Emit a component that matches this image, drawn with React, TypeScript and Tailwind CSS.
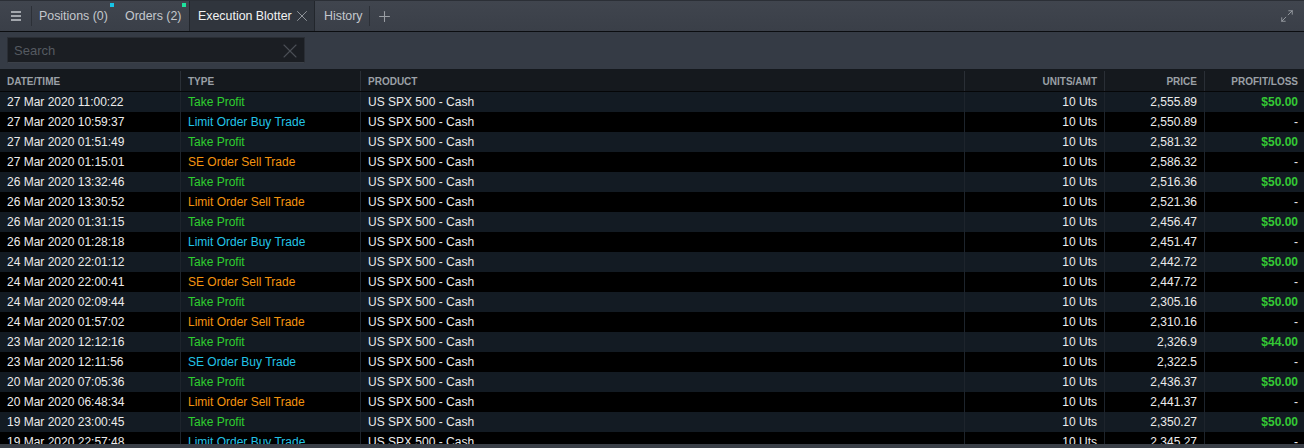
import React from "react";
import { Maximize2, X, Plus } from "lucide-react";

type Row = { dt: string; type: string; price: string; pl: string };

const rows: Row[] = [
  { dt: "27 Mar 2020 11:00:22", type: "Take Profit", price: "2,555.89", pl: "$50.00" },
  { dt: "27 Mar 2020 10:59:37", type: "Limit Order Buy Trade", price: "2,550.89", pl: "-" },
  { dt: "27 Mar 2020 01:51:49", type: "Take Profit", price: "2,581.32", pl: "$50.00" },
  { dt: "27 Mar 2020 01:15:01", type: "SE Order Sell Trade", price: "2,586.32", pl: "-" },
  { dt: "26 Mar 2020 13:32:46", type: "Take Profit", price: "2,516.36", pl: "$50.00" },
  { dt: "26 Mar 2020 13:30:52", type: "Limit Order Sell Trade", price: "2,521.36", pl: "-" },
  { dt: "26 Mar 2020 01:31:15", type: "Take Profit", price: "2,456.47", pl: "$50.00" },
  { dt: "26 Mar 2020 01:28:18", type: "Limit Order Buy Trade", price: "2,451.47", pl: "-" },
  { dt: "24 Mar 2020 22:01:12", type: "Take Profit", price: "2,442.72", pl: "$50.00" },
  { dt: "24 Mar 2020 22:00:41", type: "SE Order Sell Trade", price: "2,447.72", pl: "-" },
  { dt: "24 Mar 2020 02:09:44", type: "Take Profit", price: "2,305.16", pl: "$50.00" },
  { dt: "24 Mar 2020 01:57:02", type: "Limit Order Sell Trade", price: "2,310.16", pl: "-" },
  { dt: "23 Mar 2020 12:12:16", type: "Take Profit", price: "2,326.9", pl: "$44.00" },
  { dt: "23 Mar 2020 12:11:56", type: "SE Order Buy Trade", price: "2,322.5", pl: "-" },
  { dt: "20 Mar 2020 07:05:36", type: "Take Profit", price: "2,436.37", pl: "$50.00" },
  { dt: "20 Mar 2020 06:48:34", type: "Limit Order Sell Trade", price: "2,441.37", pl: "-" },
  { dt: "19 Mar 2020 23:00:45", type: "Take Profit", price: "2,350.27", pl: "$50.00" },
  { dt: "19 Mar 2020 22:57:48", type: "Limit Order Buy Trade", price: "2,345.27", pl: "-" },
];

function typeColor(t: string) {
  if (t === "Take Profit") return "text-[#2ed12e]";
  if (t.includes("Buy")) return "text-[#22c3e6]";
  return "text-[#f3930f]";
}

const grid = "grid grid-cols-[180px_180px_604px_140px_100px_100px]";

export default function App() {
  return (
    <div
      className="w-[1304px] h-[448px] overflow-hidden flex flex-col bg-[#343a43] text-[12px]"
      style={{ fontFamily: '"Liberation Sans", Arial, sans-serif' }}
    >
      {/* Tab bar */}
      <div className="h-[32px] shrink-0 flex items-stretch bg-gradient-to-b from-[#40454e] to-[#3a3f48] border-t border-[#2b2f36] border-b border-b-[#0b0d10] text-[12.4px]">
        <div className="w-[31px] flex items-center justify-center">
          <div className="flex flex-col gap-[2px] w-[10px]">
            <div className="h-[2px] bg-[#a3a7ad]" />
            <div className="h-[2px] bg-[#a3a7ad]" />
            <div className="h-[2px] bg-[#a3a7ad]" />
          </div>
        </div>
        <div className="w-px my-[5px] bg-[#2c3037]" />
        <div className="relative w-[85px] flex items-center pl-[7px] text-[#c4c8cd]">
          Positions (0)
          <div className="absolute left-[78px] top-[2px] w-[4px] h-[4px] bg-[#17c4e6]" />
        </div>
        <div className="relative w-[72px] flex items-center pl-[8px] text-[#c4c8cd]">
          Orders (2)
          <div className="absolute left-[65px] top-[2px] w-[4px] h-[4px] bg-[#1ee39d]" />
        </div>
        <div className="w-[126px] flex items-center pl-[8px] bg-[#30353d] border-l border-r border-[#22262c] text-[#f2f2f2]">
          <span className="w-[95px]">Execution Blotter</span>
          <X size={18} strokeWidth={1.2} className="text-[#9a9ea4]" />
        </div>
        <div className="w-[54px] flex items-center pl-[9px] text-[#c4c8cd]">History</div>
        <div className="w-px my-[5px] bg-[#2c3037]" />
        <div className="w-[29px] flex items-center justify-center text-[#9a9ea4]">
          <Plus size={17} strokeWidth={1.5} />
        </div>
        <div className="flex-1" />
        <div className="flex items-center pr-[10px] text-[#9da1a7]">
          <Maximize2 size={14} strokeWidth={1.5} />
        </div>
      </div>

      {/* Search */}
      <div className="h-[37px] shrink-0 bg-[#353b45] pt-[5px] pl-[7px]">
        <div className="w-[298px] h-[26px] bg-[#1b1e23] border border-[#2a2e35] border-b-[#3b4048] flex items-center pl-[6px] pr-[2px] pt-[1px]">
          <span className="flex-1 text-[13px] text-[#555a61]">Search</span>
          <X size={24} strokeWidth={1.1} className="text-[#4b4f56]" />
        </div>
      </div>

      {/* Header */}
      <div className={`${grid} h-[23px] shrink-0 bg-[#15191e] border-b border-[#050607] text-[10px] font-bold text-[#9ba0a6] pt-[2px]`}>
        <div className="flex items-center pl-[7px]">DATE/TIME</div>
        <div className="flex items-center pl-[7px] border-l border-[#2a2f36]">TYPE</div>
        <div className="flex items-center pl-[7px] border-l border-[#2a2f36]">PRODUCT</div>
        <div className="flex items-center justify-end pr-[7px] border-l border-[#2a2f36]">UNITS/AMT</div>
        <div className="flex items-center justify-end pr-[7px] border-l border-[#2a2f36]">PRICE</div>
        <div className="flex items-center justify-end pr-[6px] border-l border-[#2a2f36]">PROFIT/LOSS</div>
      </div>

      {/* Body */}
      <div className="h-[352px] overflow-hidden bg-black">
        {rows.map((r, i) => (
          <div
            key={i}
            className={`${grid} h-[20px] ${i % 2 === 0 ? "bg-[#131b23]" : "bg-black"} text-[#ececec]`}
          >
            <div className="flex items-center pl-[7px]">{r.dt}</div>
            <div className={`flex items-center pl-[7px] border-l border-[#1d242c] ${typeColor(r.type)}`}>{r.type}</div>
            <div className="flex items-center pl-[7px] border-l border-[#1d242c]">US SPX 500 - Cash</div>
            <div className="flex items-center justify-end pr-[7px] border-l border-[#1d242c]">10 Uts</div>
            <div className="flex items-center justify-end pr-[7px] border-l border-[#1d242c]">{r.price}</div>
            <div
              className={`flex items-center justify-end pr-[6px] border-l border-[#1d242c] ${
                r.pl === "-" ? "text-[#ececec]" : "text-[#34c934] font-bold"
              }`}
            >
              {r.pl}
            </div>
          </div>
        ))}
      </div>
      <div className="flex-1 bg-[#3a3f47]" />
    </div>
  );
}
